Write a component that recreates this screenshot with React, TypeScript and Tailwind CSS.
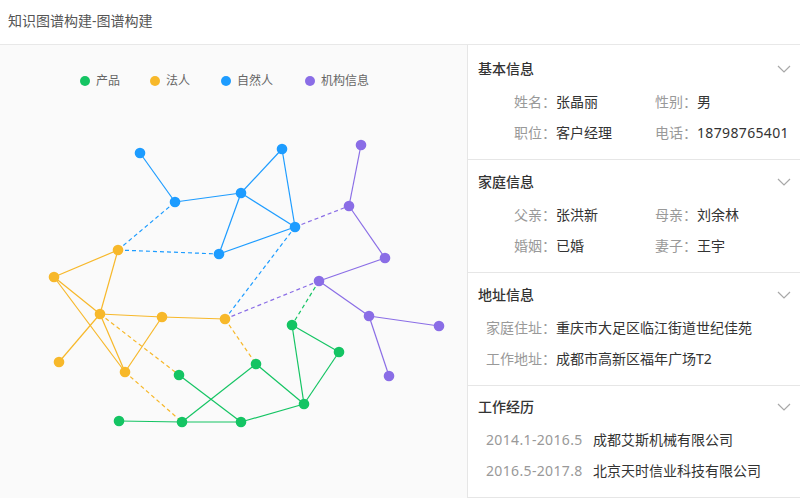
import React from "react";

type Pt = [number, number];

const GREEN = "#14c463";
const YELLOW = "#f7b82a";
const BLUE = "#1d9cff";
const PURPLE = "#8a6de6";

// node positions, page coordinates (y measured from page top)
const N: Record<string, Pt> = {
    B1: [140, 153],
    B2: [175, 202],
    B3: [241, 193],
    B4: [282, 149],
    B5: [295, 227],
    B6: [219, 254],
    Y1: [118, 250],
    Y2: [54, 277],
    Y3: [100, 314],
    Y4: [162, 317],
    Y5: [225, 319],
    Y6: [59, 362],
    Y7: [125, 372],
    P1: [361, 145],
    P2: [349, 206],
    P3: [385, 258],
    P4: [319, 281],
    P5: [369, 316],
    P6: [439, 326],
    P7: [389, 376],
    G1: [292, 325],
    G2: [339, 352],
    G3: [179, 375],
    G4: [256, 364],
    G5: [304, 404],
    G6: [119, 421],
    G7: [182, 422],
    G8: [241, 422],
};

const colorOf = (id: string) =>
    id[0] === "B" ? BLUE : id[0] === "Y" ? YELLOW : id[0] === "P" ? PURPLE : GREEN;

// [from, to, color, dashed]
const EDGES: [string, string, string, boolean][] = [
    ["B1", "B2", BLUE, false],
    ["B2", "B3", BLUE, false],
    ["B3", "B4", BLUE, false],
    ["B3", "B5", BLUE, false],
    ["B4", "B5", BLUE, false],
    ["B3", "B6", BLUE, false],
    ["B6", "B5", BLUE, false],
    ["Y1", "B2", BLUE, true],
    ["Y1", "B6", BLUE, true],
    ["Y5", "B5", BLUE, true],
    ["Y1", "Y2", YELLOW, false],
    ["Y1", "Y3", YELLOW, false],
    ["Y2", "Y3", YELLOW, false],
    ["Y2", "Y7", YELLOW, false],
    ["Y3", "Y6", YELLOW, false],
    ["Y3", "Y7", YELLOW, false],
    ["Y3", "Y4", YELLOW, false],
    ["Y4", "Y5", YELLOW, false],
    ["Y4", "Y7", YELLOW, false],
    ["Y3", "G3", YELLOW, true],
    ["Y7", "G7", YELLOW, true],
    ["Y5", "G4", YELLOW, true],
    ["Y5", "P4", PURPLE, true],
    ["B5", "P2", PURPLE, true],
    ["P1", "P2", PURPLE, false],
    ["P2", "P3", PURPLE, false],
    ["P3", "P4", PURPLE, false],
    ["P4", "P5", PURPLE, false],
    ["P5", "P6", PURPLE, false],
    ["P5", "P7", PURPLE, false],
    ["P4", "G1", GREEN, true],
    ["G1", "G2", GREEN, false],
    ["G1", "G5", GREEN, false],
    ["G2", "G5", GREEN, false],
    ["G4", "G7", GREEN, false],
    ["G4", "G5", GREEN, false],
    ["G3", "G8", GREEN, false],
    ["G6", "G7", GREEN, false],
    ["G7", "G8", GREEN, false],
    ["G8", "G5", GREEN, false],
];

const LEGEND = [
    { name: "产品", color: GREEN },
    { name: "法人", color: YELLOW },
    { name: "自然人", color: BLUE },
    { name: "机构信息", color: PURPLE },
];

const TOP = 90; // svg starts below the legend

const Graph: React.FC = () => (
    <svg width={467} height={408} className="block">
        {EDGES.map(([a, b, c, dashed], i) => (
            <line
                key={i}
                x1={N[a][0]}
                y1={N[a][1] - TOP}
                x2={N[b][0]}
                y2={N[b][1] - TOP}
                stroke={c}
                strokeWidth={1.2}
                strokeDasharray={dashed ? "4 3" : undefined}
            />
        ))}
        {Object.entries(N).map(([id, [x, y]]) => (
            <circle key={id} cx={x} cy={y - TOP} r={5.3} fill={colorOf(id)} />
        ))}
    </svg>
);

const Chevron: React.FC = () => (
    <svg width="14" height="8" viewBox="0 0 14 8" className="mr-[9px]">
        <path d="M1 1l6 6 6-6" fill="none" stroke="#a8a8a8" strokeWidth="1.2" />
    </svg>
);

const Section: React.FC<{ title: string; children: React.ReactNode; cls: string }> = ({
    title,
    children,
    cls,
}) => (
    <div className={`${cls} border-b border-[#e6e6e6]`}>
        <div className="flex items-center justify-between pl-[10px] h-[20px]">
            <span className="text-[14px] font-medium text-[#333]">{title}</span>
            <Chevron />
        </div>
        {children}
    </div>
);

const KV: React.FC<{ k: string; v: string; w?: string; num?: boolean }> = ({
    k,
    v,
    w = "w-[141px]",
    num,
}) => (
    <div className={`${w} shrink-0 whitespace-nowrap`}>
        <span className="text-[#999]">{k}：</span>
        <span className={`text-[#333] ${num ? "tracking-[0.35px]" : ""}`}>{v}</span>
    </div>
);

export default function App() {
    return (
        <div
            className="w-[800px] h-[498px] bg-white text-[14px] leading-[20px] overflow-hidden"
            style={{ fontFamily: '"Noto Sans", "Noto Sans CJK SC", sans-serif' }}
        >
            <div className="h-[45px] border-b border-[#e8e8e8] flex items-center pl-[8px] pb-[2px]">
                <span className="text-[14px] text-[#555]">知识图谱构建-图谱构建</span>
            </div>
            <div className="flex h-[453px]">
                <div className="w-[467px] bg-[#fafafa] flex flex-col">
                    <div className="flex items-center h-[18px] mt-[27px] pl-[80px] text-[12px] text-[#666]">
                        {LEGEND.map((l, i) => (
                            <div
                                key={l.name}
                                className={`flex items-center ${
                                    i === 0 ? "w-[70px]" : i === 1 ? "w-[71px]" : "w-[84px]"
                                }`}
                            >
                                <span
                                    className="w-[10px] h-[10px] rounded-full mr-[6px] -mt-[1px]"
                                    style={{ backgroundColor: l.color }}
                                />
                                {l.name}
                            </div>
                        ))}
                    </div>
                    <Graph />
                </div>
                <div className="flex-1 border-l border-[#e6e6e6] bg-white">
                    <Section title="基本信息" cls="h-[115px] pt-[14px]">
                        <div className="pl-[46px] mt-[13px] flex flex-col gap-[11px]">
                            <div className="flex">
                                <KV k="姓名" v="张晶丽" />
                                <KV k="性别" v="男" />
                            </div>
                            <div className="flex">
                                <KV k="职位" v="客户经理" />
                                <KV k="电话" v="18798765401" num />
                            </div>
                        </div>
                    </Section>
                    <Section title="家庭信息" cls="h-[113px] pt-[12px]">
                        <div className="pl-[46px] mt-[13px] flex flex-col gap-[11px]">
                            <div className="flex">
                                <KV k="父亲" v="张洪新" />
                                <KV k="母亲" v="刘余林" />
                            </div>
                            <div className="flex">
                                <KV k="婚姻" v="已婚" />
                                <KV k="妻子" v="王宇" />
                            </div>
                        </div>
                    </Section>
                    <Section title="地址信息" cls="h-[113px] pt-[12px]">
                        <div className="pl-[18px] mt-[13px] flex flex-col gap-[11px]">
                            <KV k="家庭住址" v="重庆市大足区临江街道世纪佳苑" w="w-auto" />
                            <KV k="工作地址" v="成都市高新区福年广场T2" w="w-auto" />
                        </div>
                    </Section>
                    <Section title="工作经历" cls="h-[112px] pt-[11px]">
                        <div className="pl-[18px] mt-[13px] flex flex-col gap-[11px] whitespace-nowrap">
                            <div className="flex">
                                <span className="text-[#999] w-[107px] tracking-[0.35px]">
                                    2014.1-2016.5
                                </span>
                                <span className="text-[#333]">成都艾斯机械有限公司</span>
                            </div>
                            <div className="flex">
                                <span className="text-[#999] w-[107px] tracking-[0.35px]">
                                    2016.5-2017.8
                                </span>
                                <span className="text-[#333]">北京天时信业科技有限公司</span>
                            </div>
                        </div>
                    </Section>
                </div>
            </div>
        </div>
    );
}
